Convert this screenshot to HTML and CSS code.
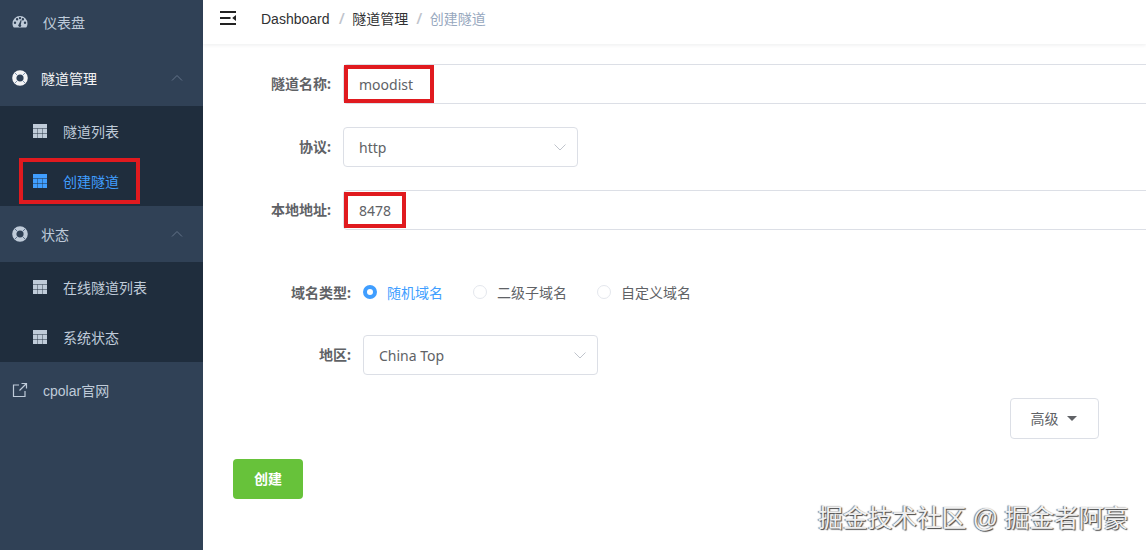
FILE: index.html
```html
<!DOCTYPE html>
<html lang="en">
<head>
<meta charset="UTF-8">
<meta name="viewport" content="width=device-width, initial-scale=1.0">
<title>创建隧道</title>
<link rel="stylesheet" href="styles.css">
</head>
<body>

<div class="app">
    <aside class="sidebar">
        <div class="menu-item">
            <svg class="icon" viewBox="0 0 16 16"><path fill-rule="evenodd" d="M8 2a7.5 7.5 0 0 0-7.5 7.5c0 1.6.5 3 1.3 4h12.4c.8-1 1.3-2.400 1.300-4A7.500 7.500 0 0 0 8 2zM3 10a1.200 1.200 0 1 1 0-2.400A1.200 1.200 0 0 1 3 10zm2.100-3.500a1.200 1.200 0 1 1 0-2.400 1.200 1.200 0 0 1 0 2.400zM8 5.300a1.200 1.200 0 1 1 0-2.400 1.200 1.200 0 0 1 0 2.400zm1.300 6.200a1.500 1.500 0 1 1-2.500-1.300l2-4.200.8.300-.8 4.400c.4.300.6.500.5.800zm1.600-5a1.200 1.200 0 1 1 0-2.400 1.200 1.200 0 0 1 0 2.400zM13 10a1.200 1.200 0 1 1 0-2.400 1.200 1.200 0 0 1 0 2.400z"/></svg>
            <span>仪表盘</span>
        </div>

        <div class="menu-item open">
            <svg class="icon ring" viewBox="0 0 16 16"><circle cx="8" cy="8" r="5.700" fill="none" stroke="currentColor" stroke-width="4.200"/><path d="M3 3l2.600 2.600M13 3l-2.600 2.600M3 13l2.600-2.600M13 13l-2.600-2.600" stroke="#7f93ad" stroke-width="1"/></svg>
            <span>隧道管理</span>
            <svg class="arrow" viewBox="0 0 12 8"><path d="M1 6.500l5-5 5 5" fill="none" stroke="currentColor"/></svg>
        </div>
        <div class="submenu">
            <div class="sub-item">
                <svg class="table" viewBox="0 0 14 14"><path d="M0 0h14v4.300H0zM0 4.800h4.400v4.300H0zM4.800 4.800h4.400v4.300H4.800zM9.600 4.800H14v4.300H9.600zM0 9.600h4.400V14H0zM4.800 9.600h4.400V14H4.800zM9.600 9.600H14V14H9.600z"/></svg>
                <span>隧道列表</span>
            </div>
            <div class="sub-item active">
                <svg class="table" viewBox="0 0 14 14"><path d="M0 0h14v4.300H0zM0 4.800h4.400v4.300H0zM4.800 4.800h4.400v4.300H4.800zM9.600 4.800H14v4.300H9.600zM0 9.600h4.400V14H0zM4.800 9.600h4.400V14H4.800zM9.600 9.600H14V14H9.600z"/></svg>
                <span>创建隧道</span>
            </div>
        </div>

        <div class="menu-item">
            <svg class="icon ring" viewBox="0 0 16 16"><circle cx="8" cy="8" r="5.700" fill="none" stroke="currentColor" stroke-width="4.200"/><path d="M3 3l2.600 2.600M13 3l-2.600 2.600M3 13l2.600-2.600M13 13l-2.600-2.600" stroke="#5f738d" stroke-width="1"/></svg>
            <span>状态</span>
            <svg class="arrow" viewBox="0 0 12 8"><path d="M1 6.500l5-5 5 5" fill="none" stroke="currentColor"/></svg>
        </div>
        <div class="submenu">
            <div class="sub-item">
                <svg class="table" viewBox="0 0 14 14"><path d="M0 0h14v4.300H0zM0 4.800h4.400v4.300H0zM4.800 4.800h4.400v4.300H4.800zM9.600 4.800H14v4.300H9.600zM0 9.600h4.400V14H0zM4.800 9.600h4.400V14H4.800zM9.600 9.600H14V14H9.600z"/></svg>
                <span>在线隧道列表</span>
            </div>
            <div class="sub-item">
                <svg class="table" viewBox="0 0 14 14"><path d="M0 0h14v4.300H0zM0 4.800h4.400v4.300H0zM4.800 4.800h4.400v4.300H4.800zM9.600 4.800H14v4.300H9.600zM0 9.600h4.400V14H0zM4.800 9.600h4.400V14H4.800zM9.600 9.600H14V14H9.600z"/></svg>
                <span>系统状态</span>
            </div>
        </div>

        <div class="menu-item">
            <svg class="icon" viewBox="0 0 16 16"><path d="M7 3H1.500v11.500H13V9M9.500 1.500h5v5M14.500 1.500L7.500 8.500" fill="none" stroke="currentColor" stroke-width="1.200"/></svg>
            <span>cpolar官网</span>
        </div>
    </aside>

    <div class="main">
        <header class="navbar">
            <svg class="hamburger" viewBox="0 0 16 14"><path d="M0 0h16v2H0zM0 6h10.500v2H0zM0 12h16v2H0zM16 4v6l-3.800-3z"/></svg>
            <div class="breadcrumb">
                <span class="first">Dashboard</span>
                <i>/</i>
                <span>隧道管理</span>
                <i>/</i>
                <span class="current">创建隧道</span>
            </div>
        </header>

        <form class="form">
            <div class="row">
                <label class="label">隧道名称:</label>
                <input class="input" type="text" value="moodist">
            </div>
            <div class="row">
                <label class="label">协议:</label>
                <div class="select">
                    <span>http</span>
                    <svg class="chevron" viewBox="0 0 12 7"><path d="M.5.500L6 6 11.500.500" fill="none" stroke="currentColor"/></svg>
                </div>
            </div>
            <div class="row">
                <label class="label">本地地址:</label>
                <input class="input" type="text" value="8478">
            </div>

            <div class="row wide domain-row">
                <label class="label">域名类型:</label>
                <div class="radios">
                    <span class="radio checked"><b></b>随机域名</span>
                    <span class="radio"><b></b>二级子域名</span>
                    <span class="radio"><b></b>自定义域名</span>
                </div>
            </div>
            <div class="row wide">
                <label class="label">地区:</label>
                <div class="select">
                    <span>China Top</span>
                    <svg class="chevron" viewBox="0 0 12 7"><path d="M.5.500L6 6 11.500.500" fill="none" stroke="currentColor"/></svg>
                </div>
            </div>

            <div class="advanced-row">
                <button class="btn-advanced" type="button">高级<em></em></button>
            </div>
            <button class="btn-create" type="button">创建</button>
        </form>
    </div>
</div>

<!-- annotations drawn on top of the screenshot -->
<div class="mark mark-menu"></div>
<div class="mark mark-name"></div>
<div class="mark mark-port"></div>
<div class="watermark">掘金技术社区 @ 掘金者阿豪</div>

</body>
</html>
```

FILE: styles.css
```css
* {
    box-sizing: border-box;
}
html, body {
    margin: 0;
    height: 550px;
    overflow: hidden;
}
body {
    position: relative;
    font-family: "Liberation Sans", "Noto Sans CJK SC", sans-serif;
    font-size: 14px;
    background: #fff;
}
.app {
    display: flex;
    height: 550px;
}

/* sidebar */
.sidebar {
    width: 203px;
    flex-shrink: 0;
    background: #304156;
    color: #bfcbd9;
}
.menu-item {
    display: flex;
    align-items: center;
    height: 56px;
    padding-left: 12px;
    position: relative;
}
.menu-item:first-child {
    margin-top: -6px;
}
.menu-item span {
    margin-left: 15px;
}
.menu-item.open {
    color: #f4f4f5;
}
.icon {
    width: 16px;
    height: 16px;
    fill: currentColor;
}
.icon.ring + span {
    margin-left: 13px;
}
.arrow {
    width: 12px;
    height: 8px;
    margin-left: auto;
    margin-right: 20px;
    color: #64748a;
}
.submenu {
    background: #1f2d3d;
}
.sub-item {
    display: flex;
    align-items: center;
    height: 50px;
    padding-left: 33px;
}
.sub-item span {
    margin-left: 16px;
}
.sub-item.active {
    color: #409eff;
}
.table {
    width: 14px;
    height: 14px;
    fill: currentColor;
}

/* top bar */
.main {
    flex: 1;
    min-width: 0;
}
.navbar {
    display: flex;
    align-items: center;
    height: 44px;
    padding: 0 0 8px 17px;
    box-shadow: 0 1px 4px rgba(0, 21, 41, .08);
}
.hamburger {
    width: 16px;
    height: 14px;
    fill: #222;
}
.breadcrumb {
    margin-left: 25px;
    color: #303133;
}
.breadcrumb .first {
    margin-right: 1px;
}
.breadcrumb i {
    margin: 0 5px;
    color: #c0c4cc;
    font-weight: bold;
}
.breadcrumb .current {
    color: #97a8be;
}

/* form */
.form {
    padding-top: 20px;
    font-family: "Noto Sans", "Noto Sans CJK SC", sans-serif;
    color: #606266;
}
.row {
    display: flex;
    align-items: center;
    height: 40px;
    margin-bottom: 23px;
}
.row.wide {
    margin-bottom: 22px;
}
.domain-row {
    margin-top: 43px;
}
.label {
    width: 140px;
    flex-shrink: 0;
    padding-right: 12px;
    text-align: right;
    font-weight: bold;
    line-height: 40px;
    height: 40px;
}
.wide .label {
    width: 160px;
}
.input {
    flex: 1;
    min-width: 0;
    height: 40px;
    margin-right: -10px;
    padding: 0 15px;
    border: 1px solid #dcdfe6;
    border-radius: 4px;
    font: inherit;
    color: #606266;
}
.select {
    display: flex;
    align-items: center;
    justify-content: space-between;
    width: 235px;
    height: 40px;
    padding: 0 11px 0 15px;
    border: 1px solid #dcdfe6;
    border-radius: 4px;
}
.chevron {
    width: 12px;
    height: 7px;
    color: #c0c4cc;
}
.radios {
    display: flex;
    margin-top: -2px;
}
.radio {
    display: flex;
    align-items: center;
    margin-right: 30px;
}
.radio b {
    width: 14px;
    height: 14px;
    margin-right: 10px;
    border: 1px solid #e4e7ed;
    border-radius: 50%;
}
.radio.checked {
    color: #409eff;
}
.radio.checked b {
    border: 4px solid #409eff;
    background: #fff;
}
.advanced-row {
    display: flex;
    justify-content: flex-end;
    padding-right: 47px;
    margin-top: 23px;
}
.btn-advanced {
    display: flex;
    align-items: center;
    justify-content: center;
    width: 89px;
    height: 41px;
    padding: 0 2px 2px 0;
    background: #fff;
    border: 1px solid #dcdfe6;
    border-radius: 4px;
    font: inherit;
    color: #606266;
}
.btn-advanced em {
    margin-left: 8px;
    margin-top: 2px;
    border: 5px solid transparent;
    border-top: 5px solid #606266;
    border-bottom: 0;
}
.btn-create {
    display: block;
    width: 70px;
    height: 40px;
    margin: 20px 0 0 30px;
    padding: 0 0 2px;
    background: #67c23a;
    border: none;
    border-radius: 4px;
    font: inherit;
    font-weight: bold;
    color: #fff;
}

/* red boxes and watermark */
.mark {
    position: absolute;
    border: 4px solid #e01a1f;
}
.mark-menu {
    left: 19px;
    top: 158px;
    width: 121px;
    height: 46px;
}
.mark-name {
    left: 344px;
    top: 65px;
    width: 90px;
    height: 38px;
}
.mark-port {
    left: 344px;
    top: 192px;
    width: 62px;
    height: 36px;
}
.watermark {
    position: absolute;
    left: 818px;
    top: 501px;
    font-size: 25px;
    letter-spacing: -.3px;
    line-height: 34px;
    white-space: nowrap;
    color: #f0f0f0;
    text-shadow: 1px 1px 1px #444, -1px 0 1px #777;
}
```
